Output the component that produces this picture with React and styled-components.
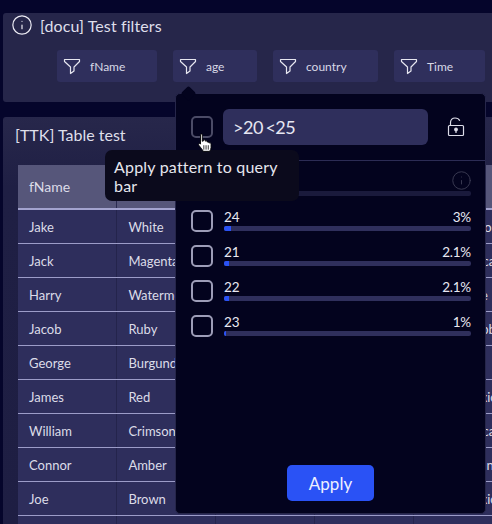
import React from "react";
import styled, { createGlobalStyle } from "styled-components";
import { Info } from "lucide-react";

const Global = createGlobalStyle`
  html, body { margin: 0; padding: 0; background: #04042a; overflow: hidden; }
  * { box-sizing: border-box; }
`;

const Page = styled.div`
  position: relative;
  width: 492px;
  height: 524px;
  overflow: hidden;
  background: #05052b;
  font-family: "Lato", "Noto Sans", sans-serif;
  color: #e4e4f0;
  padding: 13px 0 0 3px;
  display: flex;
  flex-direction: column;
  gap: 15px;
`;

const Panel = styled.section`
  flex: none;
  background: #26264a;
  border-radius: 3px 0 0 3px;
`;

const FilterPanel = styled(Panel)`
  height: 89px;
  padding: 3px 0 0 8px;
`;

const TitleRow = styled.div`
  display: flex;
  align-items: center;
  gap: 7px;
  height: 18px;
  margin-bottom: 16px;
  svg { flex: none; color: #ecebf4; }
`;

const Title = styled.h2`
  margin: 0;
  font-size: 16px;
  line-height: 17px;
  font-weight: 400;
  letter-spacing: 0.1px;
  color: #dfdfea;
`;

const Filters = styled.div`
  display: flex;
  gap: 16px;
  padding-left: 46px;
`;

const FilterBtn = styled.div`
  flex: none;
  width: ${(p) => p.$w}px;
  height: 32px;
  background: #2f2f5c;
  border-radius: 3px;
  display: flex;
  align-items: center;
  gap: 9px;
  padding-left: 6px;
  font-size: 12px;
  color: #d8d8e6;
`;

const TablePanel = styled(Panel)`
  height: 420px;
  padding: 9px 0 0 12px;
  background: linear-gradient(180deg, #27274b 0, #1f1f44 70px, #1e1e43 100%);
`;

const TableTitle = styled(Title)`
  margin-bottom: 21px;
  line-height: 18px;
  letter-spacing: 0;
`;

const Table = styled.table`
  border-collapse: collapse;
  table-layout: fixed;
  width: 495px;
  margin-left: 3px;
`;

const Th = styled.th`
  height: 44px;
  background: #56567a;
  border-bottom: 2px solid #a3a3cf;
  border-right: 1px solid #2a2a50;
  padding: 0 0 0 11px;
  font-size: 14px;
  font-weight: 400;
  text-align: left;
  color: #dcdce8;
`;

const Td = styled.td`
  height: 34px;
  background: #2e2e5c;
  border-bottom: 1px solid #9c9cc8;
  border-right: 1px solid #24244c;
  padding: 2px 0 0 11px;
  font-size: 13px;
  color: #dcdce8;
  white-space: nowrap;
  overflow: hidden;
`;

const Popover = styled.div`
  position: absolute;
  left: 175px;
  top: 93px;
  width: 311px;
  height: 421px;
  background: #03031e;
  border: 1px solid #26264a;
  border-radius: 5px;
  display: flex;
  flex-direction: column;
  &::before {
    content: "";
    position: absolute;
    left: 7px;
    top: -6px;
    width: 11px;
    height: 11px;
    background: #03031e;
    transform: rotate(45deg);
    border-radius: 2px;
  }
`;

const PatternRow = styled.div`
  display: flex;
  align-items: center;
  height: 67px;
  padding: 0 0 0 15px;
  border-bottom: 1px solid #2c2c55;
  flex: none;
`;

const Check = styled.span`
  display: block;
  flex: none;
  width: 22px;
  height: 22px;
  border-radius: 5px;
  border: 2px solid ${(p) => (p.$dim ? "#4b4b66" : "#9d9db8")};
`;

const PatternInput = styled.div`
  width: 205px;
  height: 36px;
  margin: 0 19px 0 10px;
  background: #2f2f5c;
  border-radius: 6px;
  display: flex;
  align-items: center;
  padding-left: 10px;
  font-size: 18px;
  letter-spacing: -0.5px;
  word-spacing: -1.5px;
  color: #e6e6f2;
`;

const Options = styled.div`
  flex: 1;
  position: relative;
  padding: 14px 14px 0 15px;
`;

const DimInfo = styled.span`
  position: absolute;
  right: 13px;
  top: 9px;
  color: #3a3a52;
  display: flex;
`;

const OptionRow = styled.div`
  display: flex;
  gap: 11px;
  height: 35px;
  align-items: flex-start;
`;

const OptionBody = styled.div`
  flex: 1;
`;

const OptionLine = styled.div`
  display: flex;
  justify-content: space-between;
  font-size: 13.5px;
  line-height: 15px;
  letter-spacing: -0.2px;
  color: #e8e8f2;
  height: 16px;
`;

const Track = styled.div`
  height: 5px;
  border-radius: 2px;
  background: ${(p) => (p.$dim ? "#1a1a3c" : "#2f2f5c")};
  overflow: hidden;
`;

const Fill = styled.div`
  height: 100%;
  background: #2a52f5;
`;

const Footer = styled.div`
  display: flex;
  justify-content: center;
  padding-bottom: 12px;
`;

const ApplyBtn = styled.div`
  width: 87px;
  height: 36px;
  background: #2a52f5;
  border-radius: 5px;
  display: flex;
  align-items: center;
  justify-content: center;
  font-size: 17px;
  color: #eef0ff;
`;

const Tooltip = styled.div`
  position: absolute;
  left: 105px;
  top: 150px;
  width: 194px;
  height: 51px;
  background: #0b0a1c;
  border-radius: 7px;
  padding: 7px 9px;
  font-size: 16px;
  line-height: 19px;
  letter-spacing: 0.2px;
  color: #e6e6ee;
`;

const Cursor = styled.svg`
  position: absolute;
  left: 197px;
  top: 133px;
`;

const Funnel = () => (
  <svg width="18" height="17" viewBox="0 0 18 17" fill="none" stroke="#e6e6f0" strokeWidth="1.2" style={{ flex: "none" }}>
    <path d="M1.5 1.5H16.5V3.5L11 9V13L7.5 15.5V9L1.5 3.5Z" strokeLinejoin="round" />
  </svg>
);

const OpenLock = () => (
  <svg width="18" height="20" viewBox="0 0 18 20" fill="none" stroke="#dcdce8" strokeWidth="1.2" style={{ flex: "none" }}>
    <rect x="1.5" y="8.5" width="15" height="10" rx="1" />
    <path d="M3.5 8.5V5.5C3.5 2.5 5.5 1 8 1C10.5 1 12 2 12.8 3.8" />
    <circle cx="9" cy="12.5" r="1.3" fill="#dcdce8" />
    <path d="M9 13V16" />
  </svg>
);

const rows = [
  ["Jake", "White", "", "", "Puerto Rico"],
  ["Jack", "Magenta", "", "", "South Africa"],
  ["Harry", "Watermelon", "", "", "Martinique"],
  ["Jacob", "Ruby", "", "", "West Caribbean"],
  ["George", "Burgundy", "", "", "Ireland"],
  ["James", "Red", "", "", "North Mexico"],
  ["William", "Crimson", "", "", "South Africa"],
  ["Connor", "Amber", "", "", "Older Berlin"],
  ["Joe", "Brown", "", "", "North Mexico"],
  ["", "", "", "", ""],
];

const options = [
  { label: "24", pct: "3%", w: 3 },
  { label: "21", pct: "2.1%", w: 2.1 },
  { label: "22", pct: "2.1%", w: 2.1 },
  { label: "23", pct: "1%", w: 1 },
];

export default function App() {
  return (
    <>
      <Global />
      <Page>
        <FilterPanel>
          <TitleRow>
            <Info size={22} strokeWidth={1.3} />
            <Title>[docu] Test filters</Title>
          </TitleRow>
          <Filters>
            {[["fName", 100], ["age", 84], ["country", 105], ["Time", 91]].map(([n, w]) => (
              <FilterBtn key={n} $w={w}>
                <Funnel />
                {n}
              </FilterBtn>
            ))}
          </Filters>
        </FilterPanel>
        <TablePanel>
          <TableTitle>[TTK] Table test</TableTitle>
          <Table>
            <thead>
              <tr>
                <Th>fName</Th>
                <Th>lName</Th>
                <Th>age</Th>
                <Th>sex</Th>
                <Th>country</Th>
              </tr>
            </thead>
            <tbody>
              {rows.map((r, i) => (
                <tr key={i}>
                  {r.map((c, j) => (
                    <Td key={j}>{c}</Td>
                  ))}
                </tr>
              ))}
            </tbody>
          </Table>
        </TablePanel>
        <Popover>
          <PatternRow>
            <Check $dim />
            <PatternInput>&gt;20 &lt;25</PatternInput>
            <OpenLock />
          </PatternRow>
          <Options>
            <DimInfo>
              <Info size={21} strokeWidth={1.1} />
            </DimInfo>
            <OptionRow>
              <Check />
              <OptionBody>
                <OptionLine />
                <Track $dim />
              </OptionBody>
            </OptionRow>
            {options.map((o) => (
              <OptionRow key={o.label}>
                <Check />
                <OptionBody>
                  <OptionLine>
                    <span>{o.label}</span>
                    <span>{o.pct}</span>
                  </OptionLine>
                  <Track>
                    <Fill style={{ width: `${o.w}%` }} />
                  </Track>
                </OptionBody>
              </OptionRow>
            ))}
          </Options>
          <Footer>
            <ApplyBtn>Apply</ApplyBtn>
          </Footer>
        </Popover>
        <Tooltip>Apply pattern to query bar</Tooltip>
        <Cursor width="17" height="20" viewBox="0 0 15 18">
          <path
            d="M3 1.5C3 .6 4.6 .6 4.6 1.5V7.5L5.8 7V6.5C6 6 7.3 6 7.4 6.8V7.4C7.8 6.8 9 7 9 7.8V8.2C9.6 7.8 10.6 8.2 10.6 9V9C11.5 8.6 12.5 9.2 12.5 10V13C12.5 14.5 11.8 15.5 11.2 16.5H5.5C5 15.5 3.5 13.5 1.5 11C.8 10 1.8 9 2.8 9.8L3 10Z"
            fill="#fff"
            stroke="#000"
            strokeWidth="0.8"
          />
          <path d="M6 11V15M8 11V15M10 11V15" stroke="#000" strokeWidth="0.7" />
        </Cursor>
      </Page>
    </>
  );
}
